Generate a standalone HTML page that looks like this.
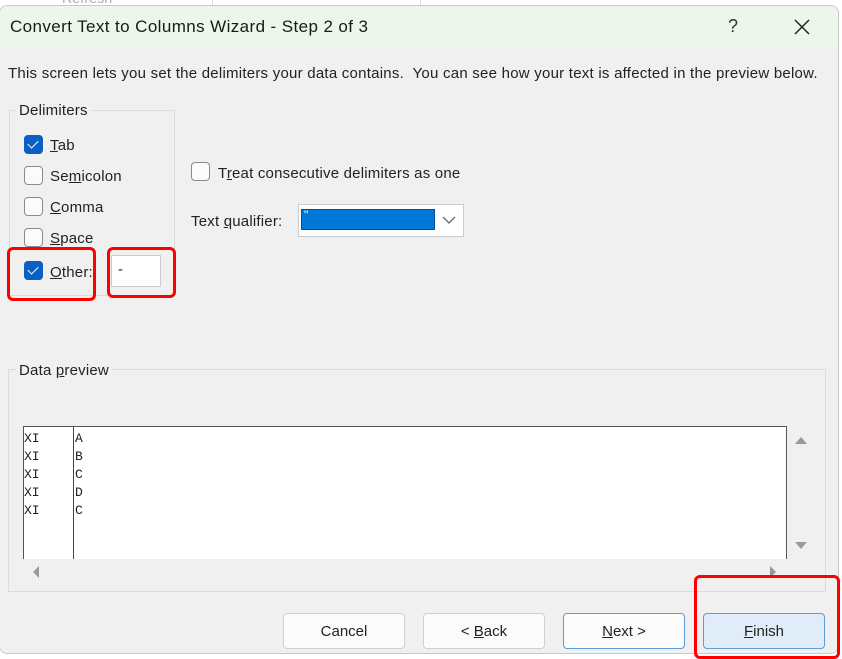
<!DOCTYPE html>
<html><head><meta charset="utf-8"><style>
*{box-sizing:border-box;margin:0;padding:0}
body{width:842px;height:657px;background:#fff;position:relative;overflow:hidden;font-family:"Liberation Sans",sans-serif;color:#222}
.a{position:absolute}
.dlg{left:-1px;top:5px;width:840px;height:649px;background:#f0f0f0;border:1px solid #c8c8c8;border-radius:8px;overflow:hidden}
.title{left:0;top:0;width:100%;height:43px;background:#ecf6ea}
.t{font-size:15px;white-space:nowrap;letter-spacing:0.2px}
.cb{width:19px;height:19px;border:1.5px solid #8a8a8a;border-radius:4px;background:#fbfbfb}
.cb.on{background:#0a5fc2;border-color:#0a5fc2}
.cb.on::after{content:"";position:absolute;left:5px;top:2px;width:5px;height:9px;border:solid #fff;border-width:0 1.5px 1.5px 0;transform:rotate(45deg)}
.grp{border:1px solid #dcdcdc}
.red{border:3.5px solid #f00;border-radius:6px}
.btn{top:613px;width:122px;height:36px;background:#fbfbfb;border:1px solid #d0d0d0;border-radius:4px;font-size:15px;text-align:center;line-height:36px}
.mono{font-family:"Liberation Mono",monospace;font-size:13px;line-height:18px}
u{text-decoration:underline}
</style></head><body>
<div class="a t" style="left:62px;top:-10px;color:#aaa;font-size:14px">Refresh</div>
<div class="a" style="left:212px;top:0;width:1px;height:5px;background:#ddd"></div>
<div class="a" style="left:420px;top:0;width:1px;height:5px;background:#ddd"></div>
<div class="a dlg">
 <div class="a title"></div>
</div>
<div class="a t" style="left:10px;top:17px;font-size:17px;color:#1a1a1a;letter-spacing:0.4px">Convert Text to Columns Wizard - Step 2 of 3</div>
<div class="a t" style="left:728px;top:16px;font-size:18px;color:#333">?</div>
<svg class="a" style="left:794px;top:19px" width="16" height="16"><path d="M1 1L15 15M15 1L1 15" stroke="#222" stroke-width="1.5"/></svg>
<div class="a t" style="left:8px;top:65px;color:#222;letter-spacing:0.24px">This screen lets you set the delimiters your data contains.&nbsp; You can see how your text is affected in the preview below.</div>

<div class="a grp" style="left:9px;top:110px;width:166px;height:186px"></div>
<div class="a t" style="left:16px;top:102px;background:#f0f0f0;padding:0 3px">Delimiters</div>
<div class="a cb on" style="left:24px;top:135px"></div><div class="a t" style="left:50px;top:137px"><u>T</u>ab</div>
<div class="a cb" style="left:24px;top:166px"></div><div class="a t" style="left:50px;top:168px">Se<u>m</u>icolon</div>
<div class="a cb" style="left:24px;top:197px"></div><div class="a t" style="left:50px;top:199px"><u>C</u>omma</div>
<div class="a cb" style="left:24px;top:228px"></div><div class="a t" style="left:50px;top:230px"><u>S</u>pace</div>
<div class="a cb" style="left:24px;top:261px"></div>
<div class="a cb on" style="left:24px;top:261px"></div><div class="a t" style="left:50px;top:264px"><u>O</u>ther:</div>
<div class="a" style="left:111px;top:255px;width:50px;height:32px;background:#fff;border:1px solid #ccc"></div>
<div class="a t" style="left:118px;top:261px">-</div>
<div class="a red" style="left:7px;top:247px;width:89px;height:54px"></div>
<div class="a red" style="left:107px;top:247px;width:69px;height:51px"></div>

<div class="a cb" style="left:191px;top:162px"></div><div class="a t" style="left:218px;top:165px">T<u>r</u>eat consecutive delimiters as one</div>
<div class="a t" style="left:191px;top:213px">Text <u>q</u>ualifier:</div>
<div class="a" style="left:298px;top:204px;width:166px;height:33px;background:#fff;border:1px solid #ccc"></div>
<div class="a" style="left:301px;top:209px;width:134px;height:21px;background:#0078d7;border:1px solid #0a4a9a"></div>
<div class="a t" style="left:304px;top:208px;color:#fff;font-size:12px">"</div>
<svg class="a" style="left:442px;top:215px" width="14" height="10"><path d="M1 2L7 8L13 2" stroke="#666" stroke-width="1.3" fill="none"/></svg>

<div class="a grp" style="left:8px;top:369px;width:818px;height:223px"></div>
<div class="a t" style="left:16px;top:362px;background:#f0f0f0;padding:0 3px">Data <u>p</u>review</div>
<div class="a" style="left:23px;top:426px;width:764px;height:133px;background:#fff;border:1px solid #555;border-bottom:none"></div>
<div class="a" style="left:73px;top:427px;width:1px;height:132px;background:#444"></div>
<div class="a mono" style="left:24px;top:430px">XI<br>XI<br>XI<br>XI<br>XI</div>
<div class="a mono" style="left:75px;top:430px">A<br>B<br>C<br>D<br>C</div>
<svg class="a" style="left:794px;top:435px" width="14" height="10"><path d="M1 9L7 2L13 9Z" fill="#999"/></svg>
<svg class="a" style="left:794px;top:541px" width="14" height="10"><path d="M1 1L7 8L13 1Z" fill="#999"/></svg>
<svg class="a" style="left:31px;top:565px" width="10" height="14"><path d="M8 1L2 7L8 13Z" fill="#999"/></svg>
<svg class="a" style="left:768px;top:565px" width="10" height="14"><path d="M2 1L8 7L2 13Z" fill="#999"/></svg>

<div class="a btn" style="left:283px">Cancel</div>
<div class="a btn" style="left:423px">&lt; <u>B</u>ack</div>
<div class="a btn" style="left:563px;border-color:#5a9ed8"><u>N</u>ext &gt;</div>
<div class="a btn" style="left:703px;background:#e0ecf8;border-color:#5a9ed8"><u>F</u>inish</div>
<div class="a red" style="left:694px;top:575px;width:146px;height:84px"></div>
</body></html>
